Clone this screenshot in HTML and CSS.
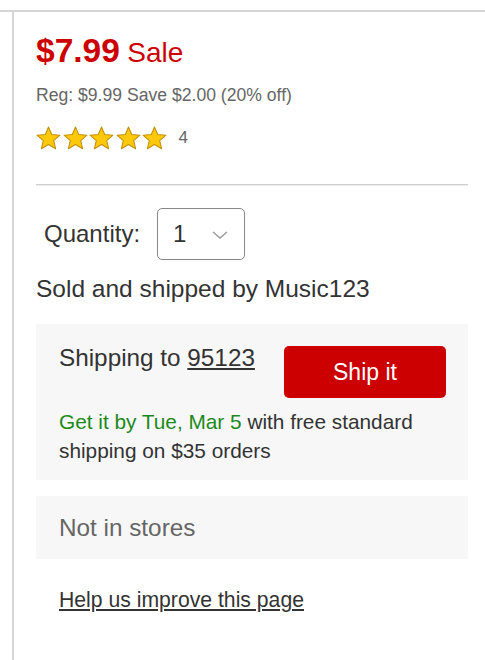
FILE: index.html
```html
<!DOCTYPE html>
<html>
<head>
<meta charset="utf-8">
<link rel="stylesheet" href="styles.css">
</head>
<body>
<div class="page">
  <div class="panel">
    <div class="price-row"><span class="price">$7.99</span> <span class="sale">Sale</span></div>
    <div class="reg">Reg: $9.99 Save $2.00 (20% off)</div>
    <div class="rating">
      <div class="stars">
        <svg class="star" viewBox="0 0 24 23"><polygon points="12,1 15.1,8.1 23,8.8 17,14 18.8,21.8 12,17.7 5.2,21.8 7,14 1,8.8 8.9,8.1"/></svg>
        <svg class="star" viewBox="0 0 24 23"><polygon points="12,1 15.1,8.1 23,8.8 17,14 18.8,21.8 12,17.7 5.2,21.8 7,14 1,8.8 8.9,8.1"/></svg>
        <svg class="star" viewBox="0 0 24 23"><polygon points="12,1 15.1,8.1 23,8.8 17,14 18.8,21.8 12,17.7 5.2,21.8 7,14 1,8.8 8.9,8.1"/></svg>
        <svg class="star" viewBox="0 0 24 23"><polygon points="12,1 15.1,8.1 23,8.8 17,14 18.8,21.8 12,17.7 5.2,21.8 7,14 1,8.8 8.9,8.1"/></svg>
        <svg class="star" viewBox="0 0 24 23"><polygon points="12,1 15.1,8.1 23,8.8 17,14 18.8,21.8 12,17.7 5.2,21.8 7,14 1,8.8 8.9,8.1"/></svg>
      </div>
      <span class="count">4</span>
    </div>
    <div class="divider"></div>
    <div class="qty-row">
      <span class="qty-label">Quantity:</span>
      <div class="select">
        <span class="select-value">1</span>
        <svg class="chevron" viewBox="0 0 16 8"><polyline points="1,1 8,7 15,1"/></svg>
      </div>
    </div>
    <div class="seller">Sold and shipped by Music123</div>
    <div class="ship-box">
      <div class="ship-row">
        <div class="ship-to">Shipping to <span class="zip">95123</span></div>
        <button class="ship-btn">Ship it</button>
      </div>
      <div class="delivery"><span class="green">Get it by Tue, Mar 5</span> with free standard shipping on $35 orders</div>
    </div>
    <div class="store-box">Not in stores</div>
    <div class="help"><a class="help-link">Help us improve this page</a></div>
  </div>
</div>
</body>
</html>
```
FILE: styles.css
```css
html, body {
  margin: 0;
  padding: 0;
  background: #fff;
}
body {
  font-family: "Liberation Sans", Arial, sans-serif;
  color: #333;
  overflow: hidden;
}
.page {
  margin-top: 10px;
  border-top: 2px solid #d6d6d6;
}
.panel {
  margin-left: 12px;
  border-left: 2px solid #d6d6d6;
  padding: 21px 17px 0 22px;
  min-height: 660px;
  box-sizing: border-box;
}
.price-row {
  line-height: 36px;
  height: 36px;
  color: #cc0000;
  white-space: nowrap;
}
.price {
  font-size: 33.5px;
  font-weight: bold;
}
.sale {
  font-size: 28px;
  margin-left: 3px;
}
.reg {
  margin-top: 16px;
  font-size: 17.6px;
  line-height: 20px;
  color: #666;
}
.rating {
  margin-top: 22px;
  display: flex;
  align-items: center;
  height: 22px;
}
.stars {
  display: flex;
  gap: 1.6px;
}
.star {
  width: 25px;
  height: 24px;
  display: block;
}
.star polygon {
  fill: #fcc80c;
  stroke: #c4900a;
  stroke-width: 1;
  stroke-linejoin: round;
}
.count {
  margin-left: 11px;
  font-size: 17px;
  color: #666;
}
.divider {
  margin-top: 35px;
  border-top: 1px solid #cfcfcf;
  border-bottom: 1px solid #ececec;
}
.qty-row {
  margin-top: 22px;
  display: flex;
  align-items: center;
  padding-left: 8px;
}
.qty-label {
  font-size: 24px;
  line-height: 28px;
}
.select {
  margin-left: 17px;
  width: 88px;
  height: 52px;
  box-sizing: border-box;
  border: 1.5px solid #888;
  border-radius: 5px;
  display: flex;
  align-items: center;
  padding-left: 15px;
}
.select-value {
  font-size: 24px;
}
.chevron {
  width: 16px;
  height: 8px;
  margin-left: 26px;
  margin-top: 2px;
}
.chevron polyline {
  fill: none;
  stroke: #999;
  stroke-width: 1.4;
}
.seller {
  margin-top: 15px;
  font-size: 24.5px;
  line-height: 28px;
  white-space: nowrap;
}
.ship-box {
  margin-top: 21px;
  background: #f7f7f7;
  padding: 20px 22px 15px 23px;
}
.ship-row {
  display: flex;
  justify-content: space-between;
  align-items: flex-start;
}
.ship-to {
  font-size: 24.3px;
  line-height: 28px;
  white-space: nowrap;
}
.zip {
  text-decoration: underline;
}
.ship-btn {
  margin-top: 2px;
  width: 162px;
  height: 52px;
  background: #cc0000;
  color: #fff;
  border: none;
  border-radius: 5px;
  font-family: "Liberation Sans", Arial, sans-serif;
  font-size: 23px;
  padding: 0;
}
.delivery {
  margin-top: 9px;
  font-size: 20.8px;
  line-height: 29px;
}
.green {
  color: #1b8a1b;
}
.store-box {
  margin-top: 16px;
  height: 63px;
  background: #f7f7f7;
  box-sizing: border-box;
  padding-left: 23px;
  display: flex;
  align-items: center;
  font-size: 24.3px;
  color: #666;
}
.help {
  margin-top: 27px;
  padding-left: 23px;
  font-size: 21.2px;
  line-height: 28px;
}
.help-link {
  color: #333;
  text-decoration: underline;
}
```
